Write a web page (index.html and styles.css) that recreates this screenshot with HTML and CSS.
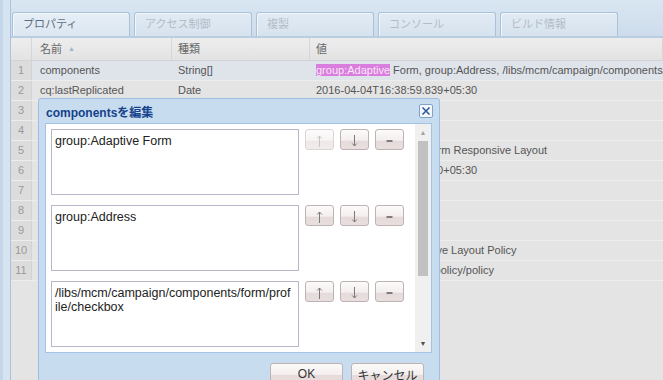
FILE: index.html
```html
<!DOCTYPE html>
<html lang="ja">
<head>
  <meta charset="UTF-8" />
  <title>components - プロパティ</title>
  <link rel="stylesheet" href="styles.css">
</head>
<body>
  <div class="window">
    <div class="edge"></div>

    <div class="main">
      <div class="tabs">
        <div class="tab active">プロパティ</div>
        <div class="tab">アクセス制御</div>
        <div class="tab">複製</div>
        <div class="tab">コンソール</div>
        <div class="tab">ビルド情報</div>
      </div>

      <div class="grid">
        <div class="grid-head">
          <div class="cell c-num"></div>
          <div class="cell c-name">名前 <span class="sort">▲</span></div>
          <div class="cell c-type">種類</div>
          <div class="cell c-value">値</div>
        </div>

        <div class="row selected">
          <div class="cell c-num">1</div>
          <div class="cell c-name">components</div>
          <div class="cell c-type">String[]</div>
          <div class="cell c-value"><span class="hit">group:Adaptive</span> Form, group:Address, /libs/mcm/campaign/components/form/profile/checkbox</div>
        </div>
        <div class="row">
          <div class="cell c-num">2</div>
          <div class="cell c-name">cq:lastReplicated</div>
          <div class="cell c-type">Date</div>
          <div class="cell c-value">2016-04-04T16:38:59.839+05:30</div>
        </div>
        <div class="row">
          <div class="cell c-num">3</div>
          <div class="cell c-name">cq:lastReplicatedBy</div>
          <div class="cell c-type">String</div>
          <div class="cell c-value">admin</div>
        </div>
        <div class="row">
          <div class="cell c-num">4</div>
          <div class="cell c-name">cq:lastReplicationAction</div>
          <div class="cell c-type">String</div>
          <div class="cell c-value">Activate</div>
        </div>
        <div class="row">
          <div class="cell c-num">5</div>
          <div class="cell c-name">jcr:description</div>
          <div class="cell c-type">String</div>
          <div class="cell c-value">Template for Adaptive Form Responsive Layout</div>
        </div>
        <div class="row">
          <div class="cell c-num">6</div>
          <div class="cell c-name">jcr:lastModified</div>
          <div class="cell c-type">Date</div>
          <div class="cell c-value">2016-04-04T16:38:59.840+05:30</div>
        </div>
        <div class="row">
          <div class="cell c-num">7</div>
          <div class="cell c-name">jcr:lastModifiedBy</div>
          <div class="cell c-type">String</div>
          <div class="cell c-value">admin</div>
        </div>
        <div class="row">
          <div class="cell c-num">8</div>
          <div class="cell c-name">jcr:primaryType</div>
          <div class="cell c-type">Name</div>
          <div class="cell c-value">nt:unstructured</div>
        </div>
        <div class="row">
          <div class="cell c-num">9</div>
          <div class="cell c-name">sling:resourceType</div>
          <div class="cell c-type">String</div>
          <div class="cell c-value">wcm/core</div>
        </div>
        <div class="row">
          <div class="cell c-num">10</div>
          <div class="cell c-name">jcr:title</div>
          <div class="cell c-type">String</div>
          <div class="cell c-value">Adaptive Form Responsive Layout Policy</div>
        </div>
        <div class="row">
          <div class="cell c-num">11</div>
          <div class="cell c-name">cq:policy</div>
          <div class="cell c-type">String</div>
          <div class="cell c-value">/conf/form/settings/wcm/policy/policy</div>
        </div>
      </div>
    </div>

    <!-- multi value editor -->
    <div class="dialog">
      <div class="dialog-title">
        <span>componentsを編集</span>
        <span class="close">
          <svg width="14" height="14" viewBox="0 0 14 14">
            <rect x="0.5" y="0.5" width="13" height="13" rx="1.5" fill="#f4f8fd" stroke="#7fa2cc"/>
            <path d="M3.5 3.5 L10.5 10.5 M10.5 3.5 L3.5 10.5" stroke="#2b5c9e" stroke-width="1.6" fill="none"/>
          </svg>
        </span>
      </div>

      <div class="dialog-body">
        <div class="items">
          <div class="item">
            <textarea class="value-box">group:Adaptive Form</textarea>
            <button class="mini" disabled title="上へ"><svg class="ico" width="7" height="12" viewBox="0 0 7 12"><path d="M3.5 1 V12 M1.2 3.5 L3.5 1 L5.8 3.5"/></svg></button>
            <button class="mini" title="下へ"><svg class="ico" width="7" height="12" viewBox="0 0 7 12"><path d="M3.5 0 V11 M1.2 8.5 L3.5 11 L5.8 8.5"/></svg></button>
            <button class="mini" title="削除"><svg class="ico dash" width="7" height="12" viewBox="0 0 7 12"><path d="M0.5 6 H6.5"/></svg></button>
          </div>
          <div class="item">
            <textarea class="value-box">group:Address</textarea>
            <button class="mini" title="上へ"><svg class="ico" width="7" height="12" viewBox="0 0 7 12"><path d="M3.5 1 V12 M1.2 3.5 L3.5 1 L5.8 3.5"/></svg></button>
            <button class="mini" title="下へ"><svg class="ico" width="7" height="12" viewBox="0 0 7 12"><path d="M3.5 0 V11 M1.2 8.5 L3.5 11 L5.8 8.5"/></svg></button>
            <button class="mini" title="削除"><svg class="ico dash" width="7" height="12" viewBox="0 0 7 12"><path d="M0.5 6 H6.5"/></svg></button>
          </div>
          <div class="item">
            <textarea class="value-box">/libs/mcm/campaign/components/form/prof
ile/checkbox</textarea>
            <button class="mini" title="上へ"><svg class="ico" width="7" height="12" viewBox="0 0 7 12"><path d="M3.5 1 V12 M1.2 3.5 L3.5 1 L5.8 3.5"/></svg></button>
            <button class="mini" title="下へ"><svg class="ico" width="7" height="12" viewBox="0 0 7 12"><path d="M3.5 0 V11 M1.2 8.5 L3.5 11 L5.8 8.5"/></svg></button>
            <button class="mini" title="削除"><svg class="ico dash" width="7" height="12" viewBox="0 0 7 12"><path d="M0.5 6 H6.5"/></svg></button>
          </div>
        </div>
        <div class="scrollbar">
          <div class="sb-arrow up">▲</div>
          <div class="sb-track"><div class="sb-thumb"></div></div>
          <div class="sb-arrow down">▼</div>
        </div>
      </div>

      <div class="dialog-foot">
        <button class="btn">OK</button>
        <button class="btn">キャンセル</button>
      </div>
    </div>
  </div>
</body>
</html>
```

FILE: styles.css
```css
body {
  margin: 0;
  font-family: "Liberation Sans", "Noto Sans CJK JP", sans-serif;
  background: #e4e4e4;
  overflow: hidden;
}

.window {
  position: relative;
  display: flex;
  width: 663px;
  height: 380px;
  overflow: hidden;
}

.edge {
  width: 7px;
  border-left: 3px solid #c4d7ea;
  border-right: 1px solid #aac3db;
  background: #d6e4f1;
}

.main {
  flex: 1;
  min-width: 0;
  display: flex;
  flex-direction: column;
}

/* Tabs */
.tabs {
  display: flex;
  gap: 4px;
  padding: 12px 0 0 1px;
  background: linear-gradient(#d9e6f2, #cddcec);
  border-bottom: 2px solid #bacee2;
}

.tab {
  box-sizing: border-box;
  width: 118px;
  height: 24px;
  padding-left: 10px;
  border: 1px solid #a9c2da;
  border-bottom: none;
  border-radius: 3px 3px 0 0;
  background: linear-gradient(#e2ebf4, #d6e2ee);
  box-shadow: inset 1px 1px 0 #f3f7fb;
  line-height: 23px;
  font-size: 11px;
  color: #b2bcc7;
}

.tab.active {
  background: linear-gradient(#e6eef6, #dce7f1);
  color: #5e6e81;
}

/* Grid */
.grid {
  flex: 1;
  background: #e4e4e4;
  font-size: 11px;
  color: #555;
}

.grid-head {
  display: flex;
  height: 22px;
  line-height: 22px;
  background: linear-gradient(#ededed, #e3e3e3);
  border-bottom: 1px solid #d3d3d3;
}

.grid-head .cell {
  border-right: 1px solid #d6d6d6;
  color: #666;
}

.sort {
  font-size: 7px;
  color: #9fb3c8;
  vertical-align: 2px;
  margin-left: 3px;
}

.row {
  display: flex;
  box-sizing: border-box;
  height: 20px;
  line-height: 19px;
  border-bottom: 1px solid #ededed;
}

.row.selected {
  background: #dfe4eb;
}

.cell {
  box-sizing: border-box;
  padding-left: 8px;
  white-space: nowrap;
  overflow: hidden;
}

.c-num {
  width: 21px;
  padding: 0;
  text-align: center;
}

.row .c-num {
  background: #dcdcdc;
  color: #9a9a9a;
  border-right: 1px solid #d2d2d2;
}

.c-name { width: 140px; }
.c-type { width: 138px; padding-left: 6px; }
.c-value { flex: 1; padding-left: 6px; }

.hit {
  background: #d97edc;
  color: #fbe6fb;
}

/* Dialog */
.dialog {
  position: absolute;
  left: 38px;
  top: 98px;
  width: 400px;
  border: 1px solid #9dbde3;
  border-radius: 3px 3px 0 0;
  background: #c8dcef;
}

.dialog-title {
  display: flex;
  justify-content: space-between;
  align-items: center;
  height: 24px;
  padding: 0 6px 0 7px;
  font-size: 12px;
  font-weight: bold;
  color: #15428b;
}

.close {
  display: flex;
}

.dialog-body {
  display: flex;
  height: 230px;
  box-sizing: border-box;
  margin: 0 7px 0 6px;
  background: #fff;
  border: 1px solid #a3c2e4;
}

.items {
  flex: 1;
  display: flex;
  flex-direction: column;
  gap: 10px;
  padding: 5px 0 0 5px;
}

.item {
  display: flex;
  align-items: flex-start;
  gap: 6px;
}

.value-box {
  box-sizing: border-box;
  width: 248px;
  height: 66px;
  margin: 0;
  padding: 4px 3px;
  border: 1px solid #b5b8c8;
  font-family: "Liberation Sans", sans-serif;
  font-size: 12.5px;
  line-height: 14px;
  color: #222;
  resize: none;
  overflow: hidden;
}

.mini {
  box-sizing: border-box;
  display: flex;
  align-items: center;
  justify-content: center;
  width: 29px;
  height: 21px;
  padding: 2px 0 0;
  border: 1px solid #bdb3b3;
  border-radius: 3px;
  background: linear-gradient(#fcfafa 0%, #f4eeee 55%, #e6dada 56%, #e9dfdf 100%);
  color: #7a7a7a;
}

.ico {
  fill: none;
  stroke: currentColor;
  stroke-width: 1;
}

.ico.dash {
  stroke: #444;
  stroke-width: 1.3;
}

.mini:disabled {
  border-color: #dcd5d5;
  background: linear-gradient(#fdfcfc 0%, #f7f3f3 55%, #efe8e8 56%, #f1ebeb 100%);
  color: #c9c3c3;
}

.scrollbar {
  width: 16px;
  display: flex;
  flex-direction: column;
  background: #f0f0f0;
}

.sb-arrow {
  height: 17px;
  text-align: center;
  font-size: 7px;
  line-height: 17px;
  color: #a3a3a3;
}

.sb-arrow.down {
  color: #505050;
}

.sb-track {
  flex: 1;
  padding: 0 3px;
}

.sb-thumb {
  height: 135px;
  background: #c1c1c1;
}

.dialog-foot {
  display: flex;
  justify-content: flex-end;
  gap: 8px;
  padding: 10px 15px 0 0;
  height: 40px;
}

.btn {
  box-sizing: border-box;
  width: 73px;
  height: 22px;
  padding: 0;
  border: 1px solid #bdb3b3;
  border-radius: 3px;
  background: linear-gradient(#fcfafa 0%, #f4eeee 55%, #e6dada 56%, #e9dfdf 100%);
  font-family: "Liberation Sans", "Noto Sans CJK JP", sans-serif;
  font-size: 12px;
  color: #333;
}
```
